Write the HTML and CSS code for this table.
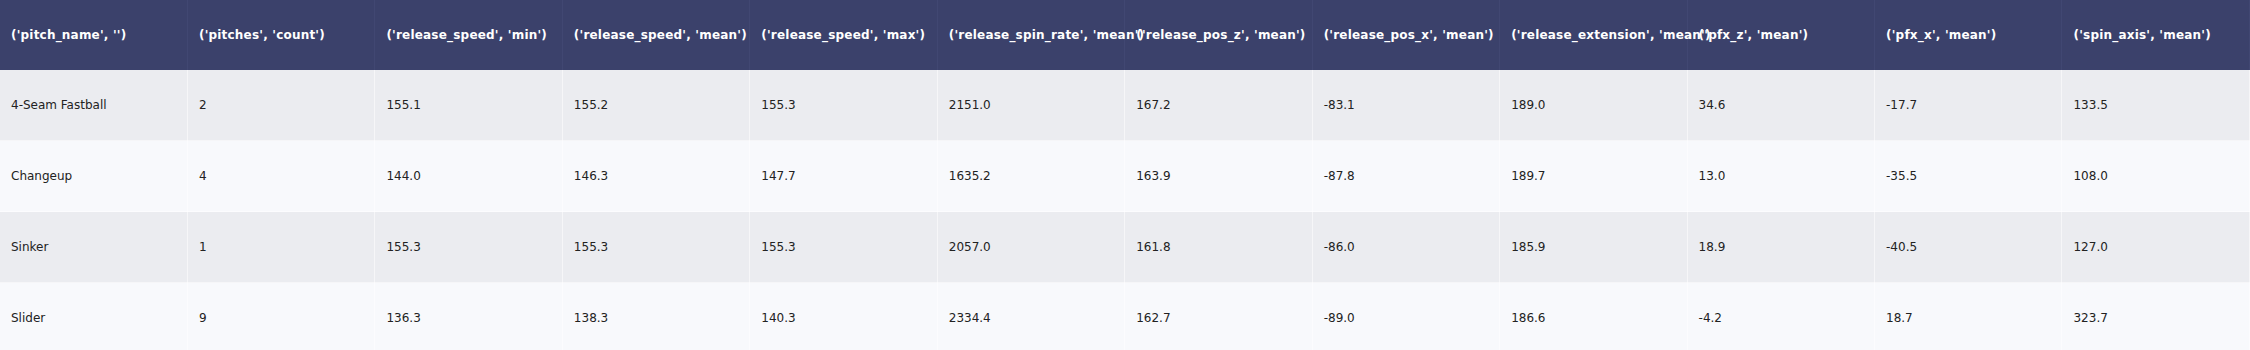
FILE: index.html
```html
<!DOCTYPE html>
<html lang="en">
<head>
    <meta charset="UTF-8">
    <title>Pitch Summary</title>
    <link rel="stylesheet" href="styles.css">
</head>
<body>
    <table class="pitch-table">
        <thead>
            <tr>
                <th>('pitch_name', '')</th>
                <th>('pitches', 'count')</th>
                <th>('release_speed', 'min')</th>
                <th>('release_speed', 'mean')</th>
                <th>('release_speed', 'max')</th>
                <th>('release_spin_rate', 'mean')</th>
                <th>('release_pos_z', 'mean')</th>
                <th>('release_pos_x', 'mean')</th>
                <th>('release_extension', 'mean')</th>
                <th>('pfx_z', 'mean')</th>
                <th>('pfx_x', 'mean')</th>
                <th>('spin_axis', 'mean')</th>
            </tr>
        </thead>
        <tbody>
            <tr class="odd">
                <td>4-Seam Fastball</td><td>2</td><td>155.1</td><td>155.2</td><td>155.3</td><td>2151.0</td>
                <td>167.2</td><td>-83.1</td><td>189.0</td><td>34.6</td><td>-17.7</td><td>133.5</td>
            </tr>
            <tr class="even">
                <td>Changeup</td><td>4</td><td>144.0</td><td>146.3</td><td>147.7</td><td>1635.2</td>
                <td>163.9</td><td>-87.8</td><td>189.7</td><td>13.0</td><td>-35.5</td><td>108.0</td>
            </tr>
            <tr class="odd">
                <td>Sinker</td><td>1</td><td>155.3</td><td>155.3</td><td>155.3</td><td>2057.0</td>
                <td>161.8</td><td>-86.0</td><td>185.9</td><td>18.9</td><td>-40.5</td><td>127.0</td>
            </tr>
            <tr class="even">
                <td>Slider</td><td>9</td><td>136.3</td><td>138.3</td><td>140.3</td><td>2334.4</td>
                <td>162.7</td><td>-89.0</td><td>186.6</td><td>-4.2</td><td>18.7</td><td>323.7</td>
            </tr>
        </tbody>
    </table>
</body>
</html>
```

FILE: styles.css
```css
body {
    margin: 0;
    background: #ffffff;
    font-family: 'DejaVu Sans', Verdana, sans-serif;
    font-size: 12px;
}
.pitch-table {
    width: 2250px;
    table-layout: fixed;
    border-collapse: collapse;
}
.pitch-table th,
.pitch-table td {
    height: 70px;
    padding: 0 11px;
    text-align: left;
    vertical-align: middle;
    white-space: nowrap;
    overflow: visible;
}
.pitch-table th {
    background: #3b416b;
    color: #ffffff;
    font-weight: bold;
    letter-spacing: 0.2px;
    border-right: 1px solid #414772;
}
.pitch-table td {
    color: #222;
    border-right: 1px solid rgba(255, 255, 255, 0.55);
    border-bottom: 1px solid rgba(255, 255, 255, 0.55);
}
.odd td {
    background: #ebecf0;
}
.even td {
    background: #f8f9fc;
}
```
